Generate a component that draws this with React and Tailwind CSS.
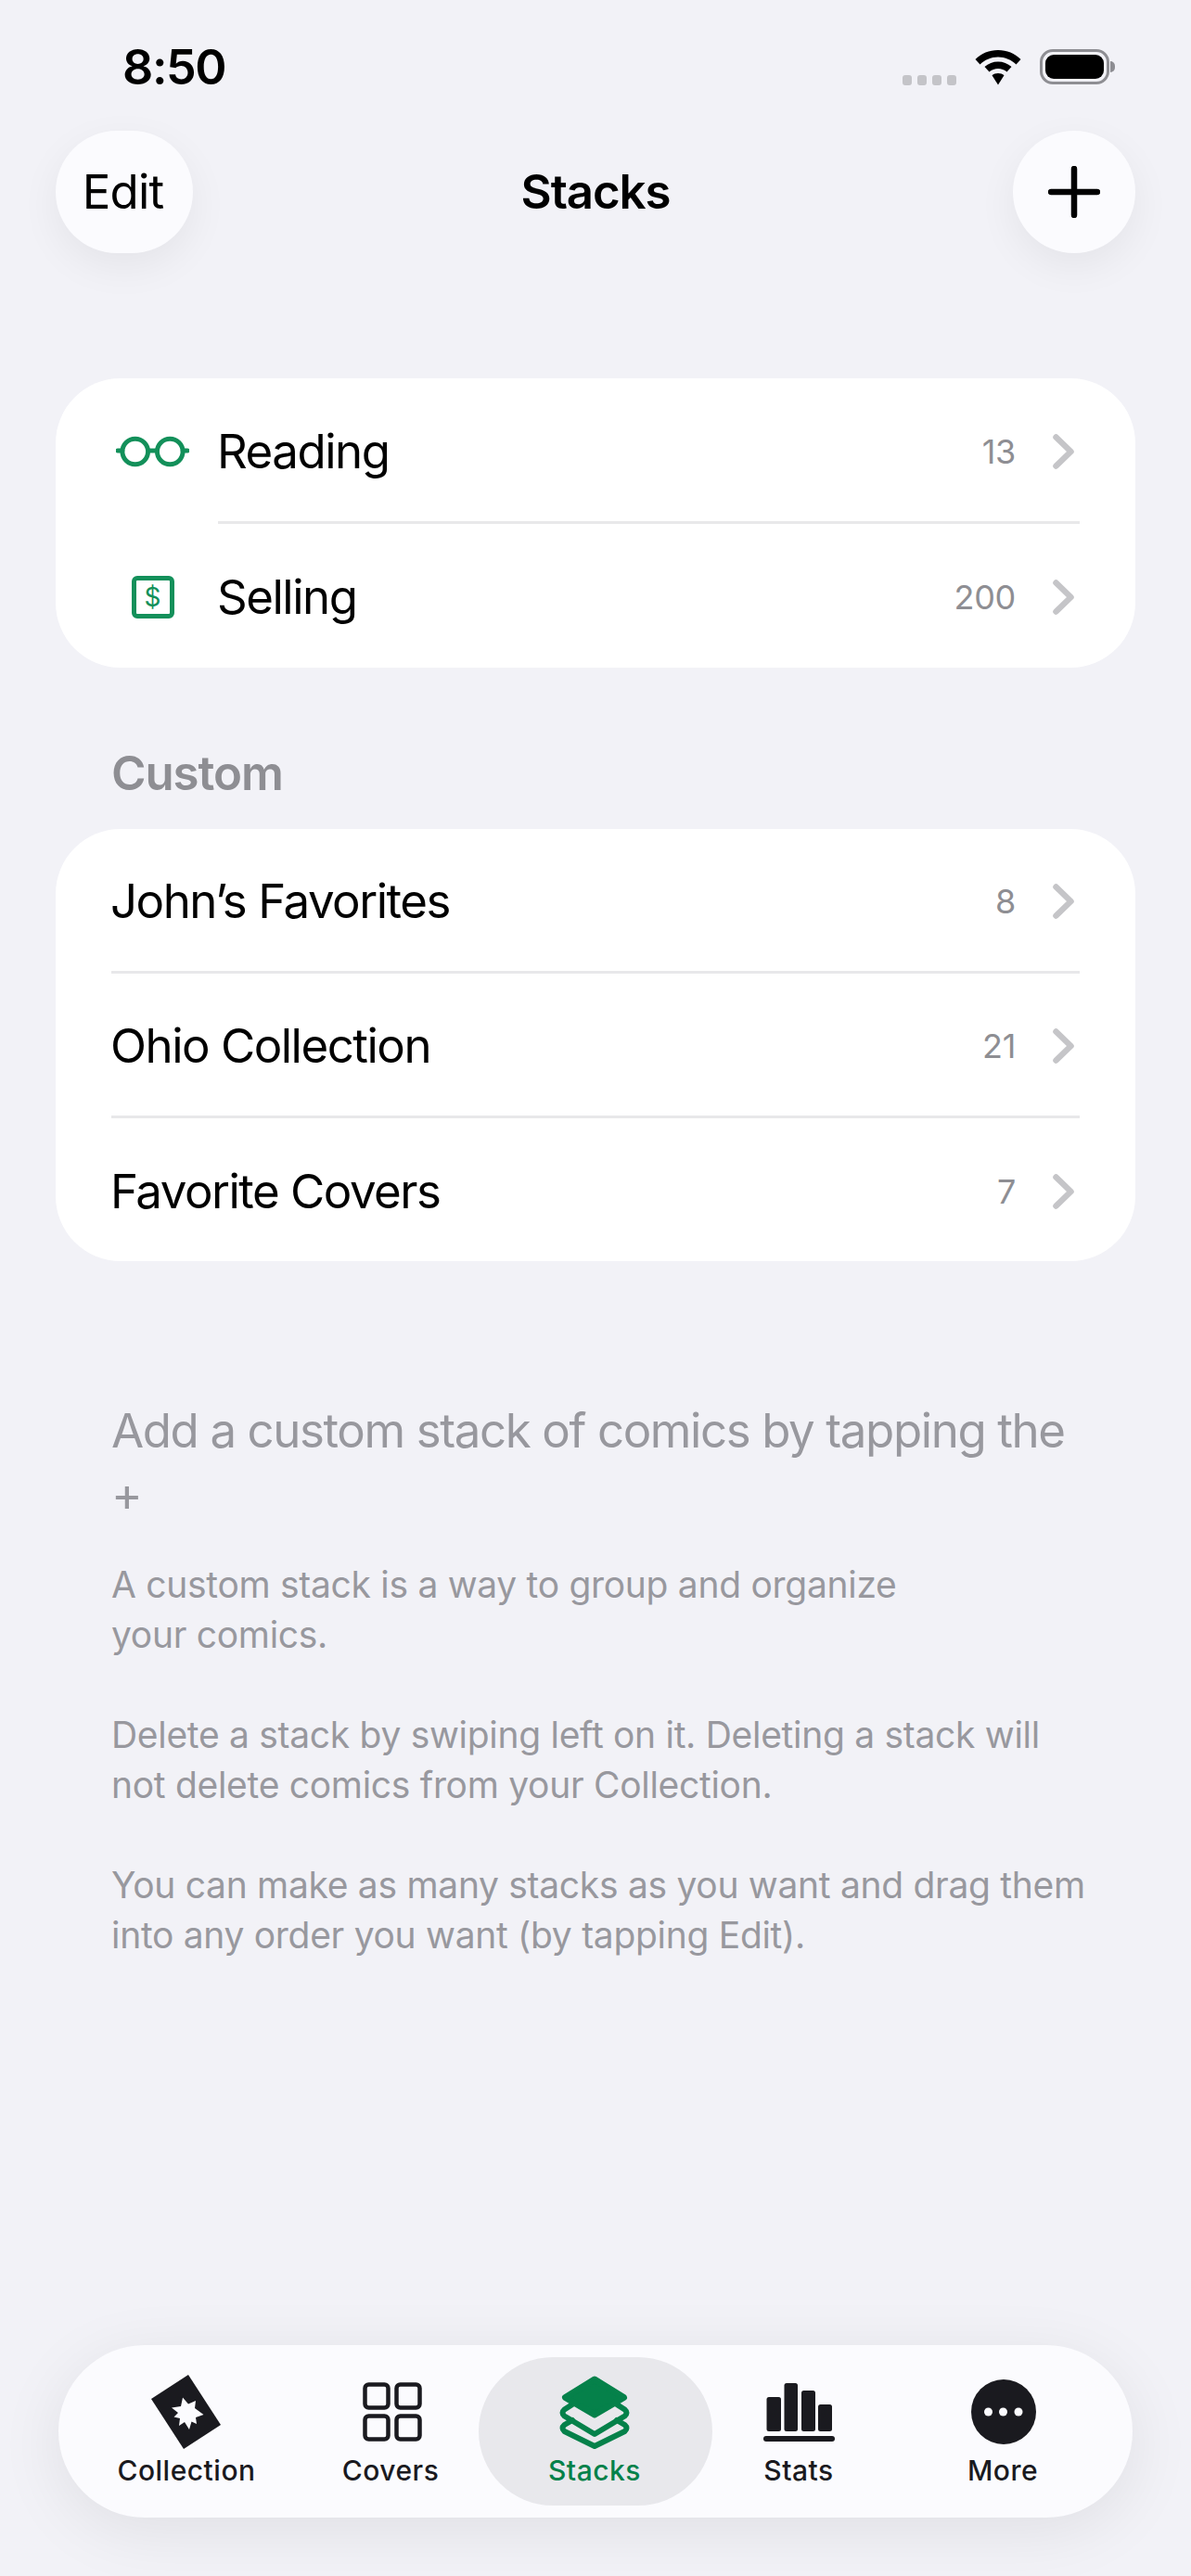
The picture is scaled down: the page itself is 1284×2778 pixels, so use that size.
import React from "react";

const Chevron = () => (
  <svg width="24" height="38" viewBox="0 0 24 38" fill="none" className="ml-[40px] mr-[4px] shrink-0">
    <path d="M3.5 3.5 L19.5 19 L3.5 34.5" stroke="#c5c5c8" strokeWidth="6.5" strokeLinecap="round" strokeLinejoin="round" />
  </svg>
);

const Glasses = () => (
  <svg width="80" height="36" viewBox="0 0 80 36" fill="none">
    <g stroke="#13905a" strokeWidth="5">
      <circle cx="21" cy="18" r="14" />
      <circle cx="59" cy="18" r="14" />
      <path d="M35 17 H45" />
      <path d="M2 17 H7 M73 17 H78" strokeLinecap="round" />
    </g>
  </svg>
);

const DollarBox = () => (
  <div className="w-[46px] h-[46px] rounded-[6px] border-[5px] border-[#13905a] flex items-center justify-center text-[#13905a] text-[28px] leading-none">
    $
  </div>
);

function Row({ icon, label, count, height }) {
  return (
    <div style={{ height }} className="shrink-0 flex items-center pr-[61px] pt-[3px]">
      {icon ? (
        <div className="w-[175px] pl-[65px] pr-[31px] flex justify-center shrink-0">{icon}</div>
      ) : (
        <div className="w-[60px] shrink-0" />
      )}
      <span className="-ml-[1px] text-[51px] leading-[60px] tracking-[-1.5px] text-black">{label}</span>
      <span className="ml-auto text-[36px] leading-[44px] text-[#8e8e93] tracking-[-0.3px]">{count}</span>
      <Chevron />
    </div>
  );
}

const Divider = ({ inset }) => <div className={`h-[3px] shrink-0 bg-[#e8e8ea] mr-[60px] ${inset}`} />;

const IconCollection = () => (
  <svg width="90" height="90" viewBox="0 0 90 90">
    <polygon points="48,5 8,31 43,85 83,59" fill="#1a1a1f" />
    <polygon
      fill="#fbfbfe"
      points="42,29.5 48,36.5 56,33 55,41 64.5,48 56,51 57,58 51.500,55.500 49,64 44,56 38,60 39,52 32.500,50.500 37,46 30,40.500 40,39"
    />
  </svg>
);

const IconCovers = () => (
  <svg width="90" height="90" viewBox="0 0 90 90" fill="none" stroke="#1a1a1f" strokeWidth="4.5">
    <rect x="18.500" y="15.500" width="25" height="25" rx="4" />
    <rect x="52.500" y="15.500" width="25" height="25" rx="4" />
    <rect x="18.500" y="49.500" width="25" height="25" rx="4" />
    <rect x="52.500" y="49.500" width="25" height="25" rx="4" />
  </svg>
);

const IconStacks = () => (
  <svg width="90" height="90" viewBox="0 0 90 90" fill="none" stroke="#05814a" strokeLinejoin="round" strokeLinecap="round">
    <path d="M22 37 L13.500 42.500 Q9.500 46 13.500 49.500 L46 69 L78.500 49.500 Q82.500 46 78.500 42.500 L70 37" strokeWidth="6" />
    <path d="M22 54 L13.500 59 Q9.500 62.500 13.500 66 L46 82 L78.500 66 Q82.500 62.500 78.500 59 L70 54" strokeWidth="6" />
    <polygon points="46,10 14.500,29.500 46,48 77.500,29.500" fill="#05814a" strokeWidth="7" />
  </svg>
);

const IconStats = () => (
  <svg width="90" height="90" viewBox="0 0 90 90" fill="#1a1a1f">
    <rect x="11.500" y="29" width="15.500" height="37" rx="2.500" />
    <rect x="30.500" y="14" width="14.500" height="52" rx="2.500" />
    <rect x="49" y="22" width="15" height="44" rx="2.500" />
    <rect x="67" y="37" width="15" height="29" rx="2.500" />
    <rect x="8" y="71" width="77" height="6" rx="3" />
  </svg>
);

const IconMore = () => (
  <svg width="90" height="90" viewBox="0 0 90 90">
    <circle cx="47" cy="45" r="35" fill="#1a1a1f" />
    <circle cx="30.500" cy="45" r="4.500" fill="#fbfbfe" />
    <circle cx="46.500" cy="45" r="4.500" fill="#fbfbfe" />
    <circle cx="63" cy="45" r="4.500" fill="#fbfbfe" />
  </svg>
);

function Tab({ icon, label, active }) {
  return (
    <div
      className={`flex flex-col items-center h-[160px] -mx-[16px] pt-[14px] rounded-[80px] ${
        active ? "bg-[#e8e8ec] text-[#05814a]" : "text-[#1a1a1f]"
      }`}
    >
      <div className="-translate-x-[2px]">{icon}</div>
      <span className="-ml-[2px] text-[30px] leading-[36px] font-medium tracking-[0.5px]">{label}</span>
    </div>
  );
}

export default function App() {
  return (
    <div
      className="w-[1284px] h-[2778px] bg-[#f2f2f7] flex flex-col overflow-hidden"
      style={{ fontFamily: "Inter, 'Liberation Sans', sans-serif" }}
    >
      {/* status bar */}
      <div className="h-[141px] shrink-0 flex pl-[132px] pr-[82px] pt-[47px] items-start">
        <span className="text-[52px] leading-[52px] font-semibold tracking-[-1.4px] text-black">8:50</span>
        <div className="ml-auto flex items-start">
          <div className="flex gap-[6px] mt-[34px]">
            <div className="w-[10px] h-[11px] rounded-[3px] bg-[#c4c4c8]" />
            <div className="w-[10px] h-[11px] rounded-[3px] bg-[#c4c4c8]" />
            <div className="w-[10px] h-[11px] rounded-[3px] bg-[#c4c4c8]" />
            <div className="w-[10px] h-[11px] rounded-[3px] bg-[#c4c4c8]" />
          </div>
          <svg width="50" height="38" viewBox="0 0 50 38" className="ml-[20px] mt-[7px]">
            <path d="M25 0 C34.500 0 43 3.500 49.500 10 L44.500 15.500 C39.500 10.500 32.500 7.500 25 7.500 C17.500 7.500 10.500 10.500 5.500 15.500 L0.500 10 C7 3.500 15.500 0 25 0 Z" />
            <path d="M25 12.500 C30.500 12.500 35.500 14.500 39.500 18 L34.500 23.500 C32 21.200 28.500 20 25 20 C21.500 20 18 21.200 15.500 23.500 L10.500 18 C14.500 14.500 19.500 12.500 25 12.500 Z" />
            <path d="M25 25 C27.500 25 29.800 25.800 31.500 27.200 L25 37.500 L18.500 27.200 C20.200 25.800 22.500 25 25 25 Z" />
          </svg>
          <div className="ml-[20px] mt-[6px] w-[75px] h-[38px] rounded-[14px] border-[3px] border-[#8e8e93] p-[3px]">
            <div className="w-full h-full rounded-[9px] bg-black" />
          </div>
          <div className="w-[5px] h-[12px] mt-[19px] ml-[1px] rounded-r-full bg-[#8e8e93]" />
        </div>
      </div>

      {/* navigation header */}
      <div className="h-[132px] shrink-0 mx-[60px] grid grid-cols-[1fr_auto_1fr] items-center">
        <div className="justify-self-start w-[148px] h-[132px] pr-[3px] rounded-full bg-[#fbfbfe] shadow-[0_14px_44px_rgba(0,0,0,0.06)] flex items-center justify-center text-[51px] tracking-[-0.8px] text-black">
          Edit
        </div>
        <div className="text-[51px] font-semibold tracking-[-1.1px] text-black">Stacks</div>
        <div className="justify-self-end w-[132px] h-[132px] rounded-full bg-[#fbfbfe] shadow-[0_14px_44px_rgba(0,0,0,0.06)] flex items-center justify-center">
          <svg width="56" height="56" viewBox="0 0 56 56">
            <path d="M28 3 V53 M3 28 H53" stroke="#000" strokeWidth="6.500" strokeLinecap="round" />
          </svg>
        </div>
      </div>

      {/* built-in stacks */}
      <div className="mt-[135px] mx-[60px] rounded-[70px] bg-white flex flex-col">
        <Row height="154px" icon={<Glasses />} label="Reading" count="13" />
        <Divider inset="ml-[175px]" />
        <Row height="155px" icon={<DollarBox />} label="Selling" count="200" />
      </div>

      <div className="mt-[84px] ml-[120px] text-[51px] leading-[60px] font-semibold tracking-[-1.1px] text-[#8e8e93]">
        Custom
      </div>

      {/* custom stacks */}
      <div className="mt-[30px] mx-[60px] rounded-[70px] bg-white flex flex-col">
        <Row height="153px" label="John’s Favorites" count="8" />
        <Divider inset="ml-[60px]" />
        <Row height="153px" label="Ohio Collection" count="21" />
        <Divider inset="ml-[60px]" />
        <Row height="154px" label="Favorite Covers" count="7" />
      </div>

      {/* help copy */}
      <div className="mt-[148px] ml-[120px] mr-[100px] text-[#98989e]">
        <p className="text-[51px] leading-[69px] tracking-[-1.4px]">
          Add a custom stack of comics by tapping the
          <br />+
        </p>
        <div className="mt-[36px] text-[39px] leading-[54px] tracking-[-0.3px]">
          <p>
            A custom stack is a way to group and organize
            <br />
            your comics.
          </p>
          <p className="mt-[54px]">
            Delete a stack by swiping left on it. Deleting a stack will
            <br />
            not delete comics from your Collection.
          </p>
          <p className="mt-[54px]">
            You can make as many stacks as you want and drag them
            <br />
            into any order you want (by tapping Edit).
          </p>
        </div>
      </div>

      {/* tab bar */}
      <div className="mt-auto mb-[63px] mx-[63px] h-[186px] shrink-0 rounded-[93px] bg-[#fbfbfe] shadow-[0_14px_70px_rgba(0,0,0,0.08)] px-[29px] py-[13px] grid grid-cols-5">
        <Tab icon={<IconCollection />} label="Collection" />
        <Tab icon={<IconCovers />} label="Covers" />
        <Tab icon={<IconStacks />} label="Stacks" active />
        <Tab icon={<IconStats />} label="Stats" />
        <Tab icon={<IconMore />} label="More" />
      </div>
    </div>
  );
}
